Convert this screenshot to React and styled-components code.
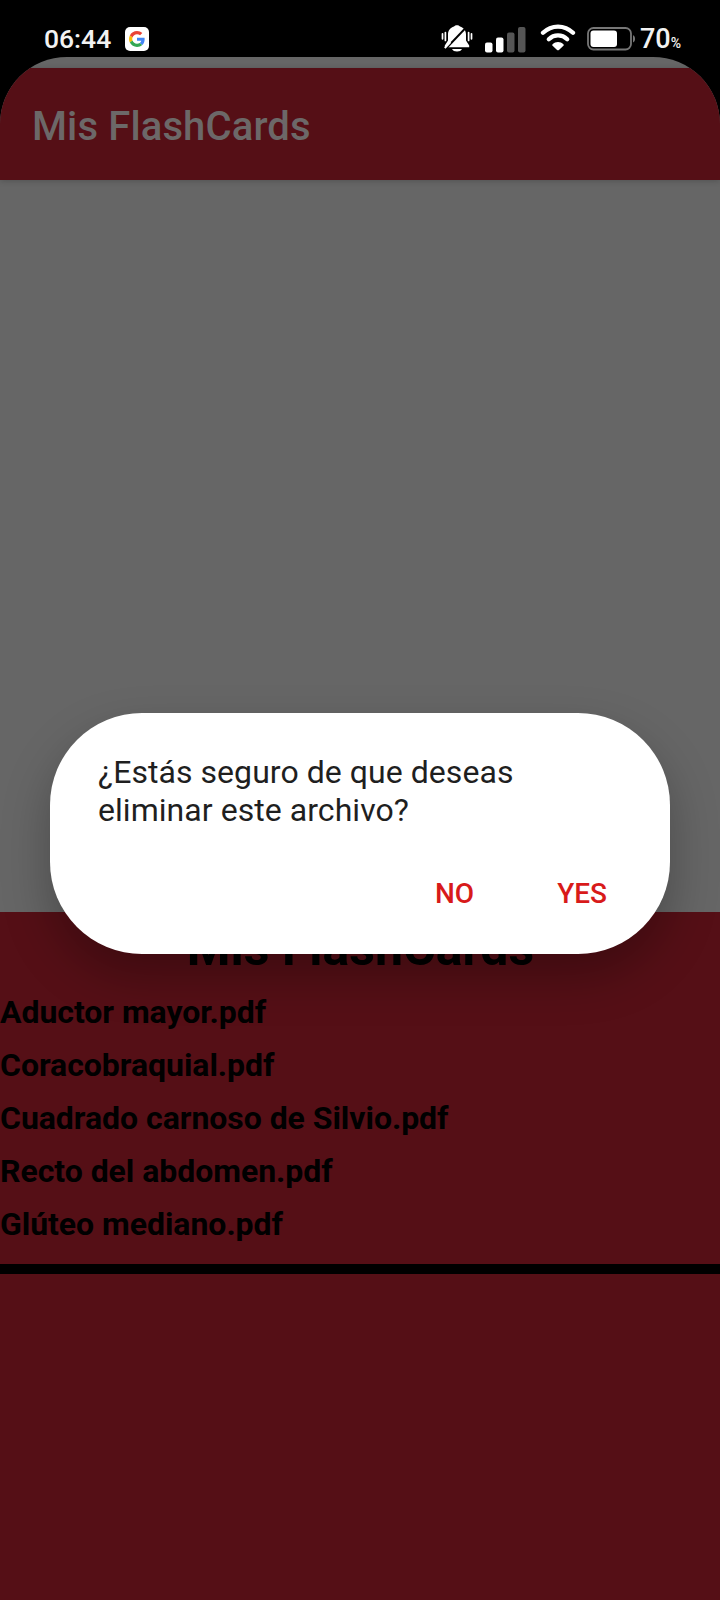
import React from 'react';
import styled, { createGlobalStyle } from 'styled-components';

const files = [
	'Aductor mayor.pdf',
	'Coracobraquial.pdf',
	'Cuadrado carnoso de Silvio.pdf',
	'Recto del abdomen.pdf',
	'Glúteo mediano.pdf',
];

const BellOffIcon = () => (
	<svg width="32" height="28" viewBox="0 0 32 28">
		<path
			d="M16 .3c1.300 0 2.200.4 3 1.200 3.800 1.100 6 4.200 6 8v6l3.200 5v1.800H3.800v-1.800L7 15.500v-6c0-3.800 2.200-6.900 6-8C13.800.7 14.700.3 16 .3z"
			fill="#fff"
		/>
		<path d="M11 24h10c-.8 1.700-2.500 2.500-5 2.500s-4.200-.8-5-2.500z" fill="#fff" />
		<path
			d="M1.500 8.800v5M4.400 7.500v8M27.600 7.500v8M30.500 8.800v5"
			stroke="#fff"
			strokeWidth="1.700"
			strokeLinecap="round"
		/>
		<path d="M5.500 23L26.500 1" stroke="#000" strokeWidth="1.900" />
		<path d="M3.800 23.200L9.500 17.200" stroke="#fff" strokeWidth="1.900" />
	</svg>
);

const SignalIcon = () => (
	<svg width="41" height="26" viewBox="0 0 41 26">
		<rect x="0" y="15.500" width="7.500" height="10" rx="2" fill="#fff" />
		<rect x="11" y="10.500" width="7.500" height="15" rx="2" fill="#fff" />
		<rect x="22" y="5.500" width="7.500" height="20" rx="2" fill="#555" />
		<rect x="33" y="0" width="7.500" height="25.500" rx="2" fill="#555" />
	</svg>
);

const WifiIcon = () => (
	<svg width="36" height="28" viewBox="0 0 36 28">
		<g fill="none" stroke="#fff" strokeWidth="4.300" strokeLinecap="round">
			<path d="M3 9.800C11.500 1.500 24.500 1.500 33 9.800" />
			<path d="M8.800 16.200c5.200-5 13.200-5 18.400 0" />
		</g>
		<path
			d="M12.600 21.200c3-2.800 7.800-2.800 10.800 0 .6.600.5 1.100 0 1.600l-4.200 3.900c-.8.700-1.600.7-2.400 0l-4.200-3.900c-.5-.5-.6-1 0-1.600z"
			fill="#fff"
		/>
	</svg>
);

const BatteryIcon = () => (
	<svg width="49" height="24" viewBox="0 0 49 24">
		<rect x="1" y="1" width="43" height="21.500" rx="5.500" fill="none" stroke="#777" strokeWidth="1.800" />
		<rect x="3.500" y="3.500" width="26.500" height="16.500" rx="3" fill="#fff" />
		<path d="M46 8.200c1.600.6 2 2 2 3.600s-.4 3-2 3.600z" fill="#777" />
	</svg>
);

const GoogleIcon = () => (
	<svg width="16" height="16" viewBox="0 0 48 48">
		<path fill="#EA4335" d="M24 9.500c3.540 0 6.710 1.220 9.210 3.600l6.850-6.850C35.900 2.380 30.470 0 24 0 14.620 0 6.510 5.380 2.560 13.220l7.980 6.190C12.430 13.720 17.740 9.500 24 9.500z" />
		<path fill="#4285F4" d="M46.980 24.550c0-1.570-.15-3.090-.38-4.550H24v9.020h12.940c-.58 2.960-2.260 5.480-4.780 7.180l7.730 6c4.510-4.180 7.090-10.360 7.090-17.650z" />
		<path fill="#FBBC05" d="M10.530 28.590c-.48-1.450-.76-2.990-.76-4.590s.27-3.140.76-4.590l-7.980-6.190C.92 16.460 0 20.120 0 24c0 3.880.92 7.540 2.560 10.780l7.970-6.190z" />
		<path fill="#34A853" d="M24 48c6.480 0 11.930-2.130 15.890-5.810l-7.730-6c-2.150 1.450-4.920 2.300-8.160 2.300-6.260 0-11.570-4.220-13.470-9.910l-7.980 6.190C6.510 42.620 14.620 48 24 48z" />
	</svg>
);

const App = () => {
	return (
		<>
			<GlobalStyle />
			<Phone>
				<StatusBar>
					<Clock>06:44</Clock>
					<GoogleBadge>
						<GoogleIcon />
					</GoogleBadge>
					<StatusIcons>
						<IconSlot top={4}>
							<BellOffIcon />
						</IconSlot>
						<IconSlot top={6} left={12}>
							<SignalIcon />
						</IconSlot>
						<IconSlot top={2} left={14}>
							<WifiIcon />
						</IconSlot>
						<IconSlot top={6} left={11}>
							<BatteryIcon />
						</IconSlot>
						<BatteryLevel>
							70<small>%</small>
						</BatteryLevel>
					</StatusIcons>
				</StatusBar>
				<Screen>
					<AppBar>
						<AppTitle>Mis FlashCards</AppTitle>
					</AppBar>
					<Viewer />
					<FilesPanel>
						<PanelTitle>Mis FlashCards</PanelTitle>
						<FileList>
							{files.map((file) => (
								<FileItem key={file}>{file}</FileItem>
							))}
						</FileList>
						<Divider />
					</FilesPanel>
				</Screen>
				<Overlay>
					<Dialog role="alertdialog">
						<Message>
							¿Estás seguro de que deseas
							<br />
							eliminar este archivo?
						</Message>
						<Actions>
							<ActionButton>NO</ActionButton>
							<ActionButton>YES</ActionButton>
						</Actions>
					</Dialog>
				</Overlay>
			</Phone>
		</>
	);
};

export default App;

const GlobalStyle = createGlobalStyle`
	* {
		box-sizing: border-box;
	}
	body {
		margin: 0;
		background: #000;
		font-family: Roboto, sans-serif;
	}
`;
const Phone = styled.div`
	position: relative;
	display: flex;
	flex-direction: column;
	width: 720px;
	height: 1600px;
	overflow: hidden;
	background: #000;
`;
const StatusBar = styled.div`
	display: flex;
	align-items: flex-start;
	height: 57px;
	padding: 21px 0 0 44px;
	color: #f2f2f2;
`;
const Clock = styled.span`
	width: 81px;
	font-size: 26.5px;
	font-weight: 500;
	line-height: 36px;
`;
const GoogleBadge = styled.span`
	display: flex;
	align-items: center;
	justify-content: center;
	width: 24px;
	height: 24px;
	margin-top: 6px;
	border-radius: 5px;
	background: #fff;
`;
const StatusIcons = styled.div`
	display: flex;
	align-items: flex-start;
	margin-left: 292px;
`;
const IconSlot = styled.span`
	display: flex;
	margin-top: ${(prop) => prop.top}px;
	margin-left: ${(prop) => prop.left || 0}px;
`;
const BatteryLevel = styled.span`
	margin-left: 4px;
	font-size: 27px;
	font-weight: 500;
	line-height: 36px;
	small {
		font-size: 14px;
	}
`;
const Screen = styled.main`
	display: flex;
	flex-direction: column;
	flex: 1;
	padding-top: 11px;
	border-radius: 67px 67px 0 0;
	overflow: hidden;
	background: #666;
`;
const AppBar = styled.header`
	display: flex;
	align-items: center;
	height: 112px;
	padding: 4px 32px 0;
	background: #550f16;
	box-shadow: 0 1px 6px rgba(0, 0, 0, 0.2);
`;
const AppTitle = styled.h1`
	margin: 0;
	font-size: 40px;
	font-weight: 500;
	letter-spacing: 0.13px;
	color: #6c6868;
`;
const Viewer = styled.section`
	height: 732px;
`;
const FilesPanel = styled.section`
	flex: 1;
	background: #550f16;
	color: #000;
`;
const PanelTitle = styled.h2`
	margin: 0;
	padding: 8px 0 0 1px;
	height: 74px;
	font-size: 50px;
	font-weight: 700;
	line-height: 56px;
	text-align: center;
`;
const FileList = styled.ul`
	margin: 0;
	padding: 0;
	height: 278px;
	list-style: none;
`;
const FileItem = styled.li`
	height: 53px;
	font-size: 32px;
	font-weight: 700;
	line-height: 53px;
	letter-spacing: -0.04px;
`;
const Divider = styled.div`
	height: 10px;
	background: #000;
`;
const Overlay = styled.div`
	position: absolute;
	inset: 0;
	padding: 713px 50px 0;
`;
const Dialog = styled.div`
	display: flex;
	flex-direction: column;
	height: 241px;
	padding: 40px 47px 36px 48px;
	border-radius: 92px;
	background: #fff;
	box-shadow: 0 22px 48px rgba(0, 0, 0, 0.27);
`;
const Message = styled.p`
	margin: 0;
	font-size: 32px;
	line-height: 38px;
	letter-spacing: 0.05px;
	color: #1f1f1f;
`;
const Actions = styled.div`
	display: flex;
	justify-content: flex-end;
	gap: 51px;
	margin-top: auto;
`;
const ActionButton = styled.button`
	padding: 0 16px;
	border: 0;
	background: none;
	font-family: inherit;
	font-size: 28px;
	font-weight: 500;
	line-height: 48px;
	color: #d81a1a;
	cursor: pointer;
`;
